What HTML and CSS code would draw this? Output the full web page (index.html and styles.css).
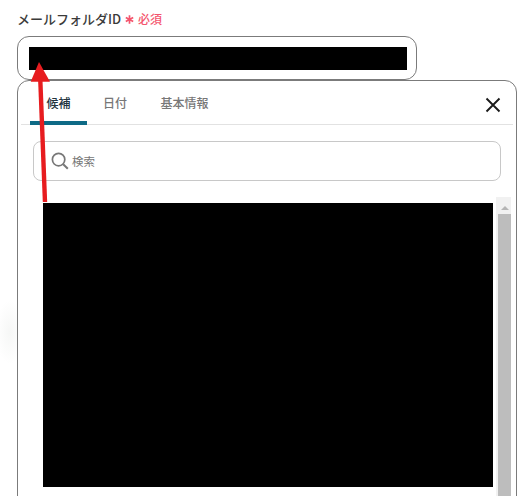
FILE: index.html
```html
<!DOCTYPE html>
<html lang="ja">
<head>
<meta charset="utf-8">
<title>メールフォルダID</title>
<link rel="stylesheet" href="styles.css">
</head>
<body>
<div class="page">
  <div class="label-row">
    <span class="label">メールフォルダID</span>
    <svg class="star" width="9" height="9" viewBox="0 0 9 9"><path d="M4.5 0.3V8.7M0.8 2.4 8.2 6.6M8.2 2.4 0.8 6.6" stroke="#f4566e" stroke-width="1.7" fill="none"/></svg>
    <span class="req">必須</span>
  </div>
  <div class="field"><div class="redact-input"></div></div>
  <div class="panel">
    <div class="tabs">
      <div class="tab active">候補</div>
      <div class="tab">日付</div>
      <div class="tab">基本情報</div>
      <svg class="close" width="16" height="16" viewBox="0 0 16 16" aria-label="閉じる"><path d="M1.5 1.5 14.5 14.5M14.5 1.5 1.5 14.5" stroke="#1a1a1a" stroke-width="1.9" fill="none"/></svg>
    </div>
    <div class="search">
      <svg width="18" height="18" viewBox="0 0 18 18"><circle cx="7.6" cy="7.6" r="6.2" stroke="#777" stroke-width="1.7" fill="none"/><path d="M12.2 12.2 16.8 16.8" stroke="#777" stroke-width="2" fill="none"/></svg>
      <span class="placeholder">検索</span>
    </div>
    <div class="list-wrap">
      <div class="redact-list"></div>
      <div class="scrollbar">
        <div class="scroll-up"></div>
        <div class="thumb"></div>
      </div>
    </div>
  </div>
  <svg class="arrow" width="30" height="150" viewBox="0 0 30 150"><path d="M20 142 15.3 20" stroke="#e71c1f" stroke-width="4.4" fill="none"/><path d="M14 2 25 21.7 5.7 21.7Z" fill="#e71c1f"/></svg>
</div>
</body>
</html>
```
FILE: styles.css
```css
* { box-sizing: border-box; }
html, body { margin: 0; background: #fff; }
body { width: 518px; height: 496px; overflow: hidden; font-family: "Noto Sans CJK JP", "Noto Sans", sans-serif; }
.page {
  position: relative;
  height: 496px;
  padding: 9px 1px 0 17px;
  overflow: hidden;
  background: radial-gradient(ellipse 14px 32px at 10px 332px, #f6f7f6 0%, #ffffff 100%);
}
.label-row { display: flex; align-items: center; height: 19px; margin-bottom: 8px; }
.label { font-size: 13px; font-weight: 500; color: #3a3a3a; }
.star { margin-left: 4px; margin-top: 1px; }
.req { margin-left: 4px; font-size: 12px; line-height: 19px; font-weight: 500; color: #f4566e; }
.field {
  width: 400px; height: 44px; padding: 10px 9px 0 11px;
  background: #fff; border: 1px solid #7b7b7b; border-radius: 12px;
}
.redact-input { width: 378px; height: 23px; background: #000; }
.panel {
  width: 500px; height: 430px; padding: 0 3px;
  background: #fff; border: 1px solid #7b7b7b; border-radius: 12px;
}
.tabs { position: relative; display: flex; height: 44px; padding-left: 9px; border-bottom: 1px solid #e2e2e2; }
.tab { width: 57px; padding-top: 12px; text-align: center; font-size: 12px; line-height: 20px; font-weight: 500; color: #777; }
.tab:nth-child(2) { width: 56px; }
.tab:nth-child(3) { width: 83px; }
.tab.active { height: 44px; color: #24343f; border-bottom: 4px solid #0e6a86; border-radius: 4px 4px 0 0; }
.close { position: absolute; top: 16px; right: 12px; }
.search {
  display: flex; align-items: center; gap: 3px;
  width: 468px; height: 40px; margin: 16px 0 0 12px; padding-left: 17px;
  border: 1px solid #c8c8c8; border-radius: 8px;
}
.placeholder { font-size: 11.5px; color: #777; }
.list-wrap { display: flex; margin-top: 16px; align-items: flex-start; }
.redact-list { width: 450px; height: 284px; margin: 6px 0 0 22px; background: #000; }
.scrollbar { width: 15px; height: 300px; margin-left: 3px; padding-left: 2px; background: #f1f1f1; }
.scroll-up { width: 0; height: 0; margin: 9px 0 0 3px; border: 4px solid transparent; border-top-width: 0; border-bottom: 4px solid #b5b5b5; }
.thumb { width: 13px; height: 290px; margin-top: 4px; background: #bdbdbd; }
.arrow { position: absolute; left: 25px; top: 60px; }
```
